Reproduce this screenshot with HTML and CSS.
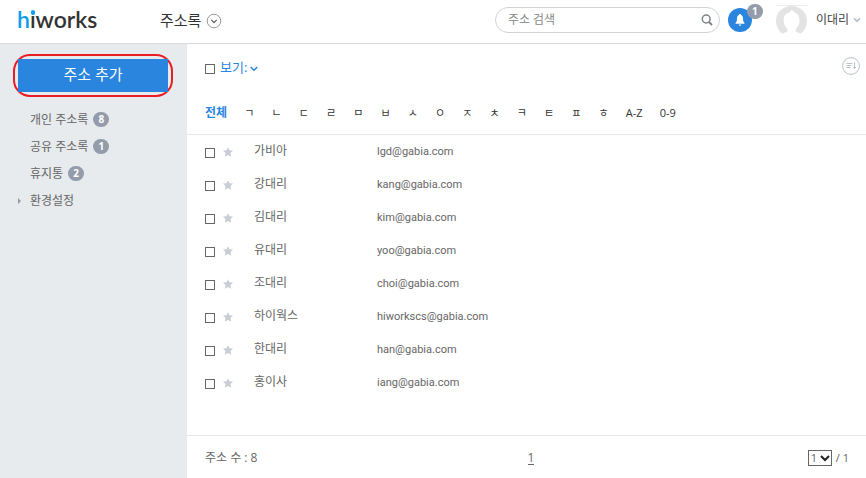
FILE: index.html
```html
<!DOCTYPE html>
<html lang="ko">
<head>
<meta charset="utf-8">
<title>주소록 - hiworks</title>
<link rel="stylesheet" href="styles.css">
</head>
<body>
<svg class="defs" aria-hidden="true">
  <symbol id="star" viewBox="0 0 10 10"><path d="M5 .2 6.500 3.200 10 3.600 7.500 6.100 8.200 9.800 5 8.100 1.800 9.800 2.500 6.100 0 3.600 3.500 3.200z" fill="#c9ced6"/></symbol>
</svg>
<header class="header">
  <a class="logo" href="#"><span class="logo-h">h</span><span class="logo-i">i</span>works</a>
  <button class="app-menu" type="button">
    주소록
    <svg width="16" height="16" viewBox="0 0 16 16" fill="none"><circle cx="8" cy="8" r="6.8" stroke="#999"/><path d="M5.3 6.9 8 9.6l2.7-2.7" stroke="#555" stroke-width="1.2"/></svg>
  </button>
  <form class="search">
    <input type="search" placeholder="주소 검색" aria-label="주소 검색">
    <button type="button" aria-label="검색"><svg width="12" height="12" viewBox="0 0 12 12" fill="none" stroke="#7c8288"><circle cx="5.2" cy="5" r="3.9" stroke-width="1.5"/><path d="m8 8 3 3" stroke-width="2"/></svg></button>
  </form>
  <button class="bell" type="button" aria-label="알림 1">
    <svg width="10" height="14" viewBox="0 0 10 14" fill="#fff"><path d="M5 1c.6 0 1 .4 1 1 1.500.5 2 1.700 2 3.200C8 8 8.500 9 9.500 10v.8H.5V10C1.500 9 2 8 2 5.200 2 3.700 2.500 2.500 4 2c0-.6.4-1 1-1z"/><path d="M3.700 11.400h2.600a1.300 1.300 0 0 1-2.600 0z"/></svg>
    <span class="badge bell-badge">1</span>
  </button>
  <button class="user" type="button">
    <svg class="avatar" width="31" height="29" viewBox="0 0 31 29"><path d="M0 .5h31" stroke="#ececec"/><path d="M6 28.500C2.500 25.500 0 21 0 15.700 0 7.500 6.900 1 15.500 1S31 7.500 31 15.700c0 5.300-2.500 9.800-6 12.800-2-.4-4.200-1.300-5.500-2.300.3-1.800.9-3.200 2.300-4.700 1.500-1.900 1.900-4.500 1.500-8-.3-2.600-1.600-4.800-4.200-5.800-1.300-.6-2.400-1.600-3.300-3.100-.8 1.600-2 2.600-3.500 3.200-2.700 1-4.200 3.100-4.500 5.700-.4 3.500.2 6.100 1.700 8 1.300 1.500 1.900 2.900 2.200 4.700-1.500 1-3.700 1.900-5.700 2.300z" fill="#e3e3e3"/></svg>
    이대리
    <svg width="8" height="6" viewBox="0 0 8 6" fill="none" stroke="#b4bec8" stroke-width="1.600"><path d="m1 1.300 3 3 3-3"/></svg>
  </button>
</header>
<div class="body">
  <aside class="sidebar">
    <div class="ring"><button class="add" type="button">주소 추가</button></div>
    <nav>
      <ul class="folders">
        <li><a href="#">개인 주소록</a><span class="badge">8</span></li>
        <li><a href="#">공유 주소록</a><span class="badge">1</span></li>
        <li><a href="#">휴지통</a><span class="badge">2</span></li>
        <li class="settings"><a href="#">환경설정</a></li>
      </ul>
    </nav>
  </aside>
  <main class="main">
    <div class="toolbar">
      <input type="checkbox" aria-label="전체 선택">
      <button class="view" type="button">보기: <svg width="8" height="6" viewBox="0 0 8 6" fill="none" stroke="#2a85de" stroke-width="1.500"><path d="m.7 1 3.300 3.300L7.300 1"/></svg></button>
      <button class="sort" type="button" aria-label="정렬"><svg width="18" height="18" viewBox="0 0 18 18" fill="none" stroke="#b9c1ca"><circle cx="9" cy="9" r="8.400"/><path d="M4.500 6.500h6M4.500 8.500h5M4.500 10.500h4M12.500 5.500v6M11 10l1.500 1.500L14 10"/></svg></button>
    </div>
    <nav class="index">
      <div class="index-list">
        <a class="on" href="#">전체</a><a href="#">ㄱ</a><a href="#">ㄴ</a><a href="#">ㄷ</a><a href="#">ㄹ</a><a href="#">ㅁ</a><a href="#">ㅂ</a><a href="#">ㅅ</a><a href="#">ㅇ</a><a href="#">ㅈ</a><a href="#">ㅊ</a><a href="#">ㅋ</a><a href="#">ㅌ</a><a href="#">ㅍ</a><a href="#">ㅎ</a><a href="#">A-Z</a><a href="#">0-9</a>
      </div>
    </nav>
    <table class="contacts">
      <tbody>
        <tr><td class="check"><input type="checkbox" aria-label="가비아"></td><td class="star"><svg><use href="#star"/></svg></td><td class="name">가비아</td><td class="mail">lgd@gabia.com</td></tr>
        <tr><td class="check"><input type="checkbox" aria-label="강대리"></td><td class="star"><svg><use href="#star"/></svg></td><td class="name">강대리</td><td class="mail">kang@gabia.com</td></tr>
        <tr><td class="check"><input type="checkbox" aria-label="김대리"></td><td class="star"><svg><use href="#star"/></svg></td><td class="name">김대리</td><td class="mail">kim@gabia.com</td></tr>
        <tr><td class="check"><input type="checkbox" aria-label="유대리"></td><td class="star"><svg><use href="#star"/></svg></td><td class="name">유대리</td><td class="mail">yoo@gabia.com</td></tr>
        <tr><td class="check"><input type="checkbox" aria-label="조대리"></td><td class="star"><svg><use href="#star"/></svg></td><td class="name">조대리</td><td class="mail">choi@gabia.com</td></tr>
        <tr><td class="check"><input type="checkbox" aria-label="하이웍스"></td><td class="star"><svg><use href="#star"/></svg></td><td class="name">하이웍스</td><td class="mail">hiworkscs@gabia.com</td></tr>
        <tr><td class="check"><input type="checkbox" aria-label="한대리"></td><td class="star"><svg><use href="#star"/></svg></td><td class="name">한대리</td><td class="mail">han@gabia.com</td></tr>
        <tr><td class="check"><input type="checkbox" aria-label="홍이사"></td><td class="star"><svg><use href="#star"/></svg></td><td class="name">홍이사</td><td class="mail">iang@gabia.com</td></tr>
      </tbody>
    </table>
    <footer class="footer">
      <span>주소 수 : 8</span>
      <a class="page" href="#">1</a>
      <span class="jump"><span class="select"><select aria-label="페이지"><option>1</option></select><svg width="10" height="7" viewBox="0 0 10 7" fill="none" stroke="#222" stroke-width="2"><path d="m1 1 4 4 4-4"/></svg></span>/ 1</span>
    </footer>
  </main>
</div>
</body>
</html>
```
FILE: styles.css
```css
* { box-sizing: border-box; }

body {
  margin: 0;
  min-height: 100vh;
  display: flex;
  flex-direction: column;
  font: 12px/18px "Open Sans", "Noto Sans CJK KR", sans-serif;
  color: #666;
  background: #fff;
}

.defs { display: none; }

a { color: inherit; text-decoration: none; }

button {
  padding: 0;
  border: 0;
  background: none;
  font: inherit;
  color: inherit;
}

svg { display: block; flex: none; }

input[type="checkbox"] {
  appearance: none;
  display: block;
  flex: none;
  width: 10px;
  height: 10px;
  margin: 0;
  border: 1px solid #666;
  background: #fff;
}

.badge {
  min-width: 16px;
  height: 15px;
  border-radius: 8px;
  background: #949bab;
  color: #fff;
  font-size: 10px;
  font-weight: 700;
  line-height: 15px;
  text-align: center;
}

/* Header */
.header {
  display: flex;
  align-items: center;
  height: 44px;
  padding: 0 5px 4px 17px;
  border-bottom: 1px solid #d9dbdd;
}

.logo {
  width: 143px;
  padding-bottom: 2px;
  font: 600 23px/24px Lato, sans-serif;
  color: #333;
}

.logo-h { color: #0a9df0; }

.logo-i { position: relative; }

.logo-i::after {
  content: "";
  position: absolute;
  left: 1px;
  top: 5px;
  width: 4px;
  height: 5px;
  border-radius: 2px;
  background: #0a9df0;
}

.app-menu {
  display: flex;
  align-items: center;
  gap: 5px;
  font-size: 15px;
  color: #333;
}

.app-menu svg { margin-top: 3px; }

.search {
  display: flex;
  align-items: center;
  width: 225px;
  height: 26px;
  margin-left: auto;
  padding: 0 6px 0 12px;
  border: 1px solid #d0d3d6;
  border-radius: 13px;
}

.search input {
  flex: 1;
  min-width: 0;
  padding: 0;
  border: 0;
  outline: 0;
  background: none;
  font: inherit;
  color: #888;
}

.search input::placeholder { color: #888; }

.bell {
  position: relative;
  display: flex;
  align-items: center;
  justify-content: center;
  width: 24px;
  height: 24px;
  margin-left: 8px;
  border-radius: 50%;
  background: #2a85de;
}

.bell-badge {
  position: absolute;
  left: 19px;
  top: -4px;
}

.user {
  display: flex;
  align-items: center;
  gap: 4px;
  margin-left: 24px;
  font-size: 12px;
  color: #444;
}

.avatar { margin-right: 5px; }

/* Body */
.body {
  flex: 1;
  display: flex;
}

.sidebar {
  width: 187px;
  padding: 10px 14px 0 13px;
  background: #e7ebee;
}

.ring {
  padding: 3px;
  border: 2px solid #ea1c24;
  border-radius: 17px;
}

.add {
  display: block;
  width: 100%;
  height: 33px;
  padding-bottom: 4px;
  background: #2a85de;
  color: #fff;
  font-size: 15px;
}

.folders {
  margin: 9px 0 0;
  padding: 0 0 0 17px;
  list-style: none;
}

.folders li {
  display: flex;
  align-items: center;
  gap: 5px;
  height: 27px;
}

.settings { position: relative; }

.settings::before {
  content: "";
  position: absolute;
  left: -12px;
  border: 3px solid transparent;
  border-left-color: #999;
  border-right-width: 0;
}

/* Main */
.main {
  flex: 1;
  display: flex;
  flex-direction: column;
}

.toolbar {
  display: flex;
  align-items: center;
  gap: 5px;
  padding: 13px 6px 0 18px;
}

.toolbar input { margin-top: 4px; }

.view {
  display: flex;
  align-items: center;
  gap: 3px;
  font-size: 13px;
  color: #2a85de;
}

.view svg { margin-top: 4px; }

.sort { margin: 0 0 2px auto; }

.index {
  padding: 27px 18px 12px;
  border-bottom: 1px solid #e7ebee;
}

.index-list {
  display: flex;
  justify-content: space-between;
  max-width: 471px;
  font-size: 11px;
  color: #333;
}

.index-list .on {
  font-size: 12px;
  font-weight: 700;
  color: #2a85de;
}

.contacts {
  width: 100%;
  table-layout: fixed;
  border-collapse: collapse;
}

.contacts tr { height: 33px; }

.contacts td {
  padding: 0;
  vertical-align: middle;
}

.contacts .check { width: 36px; padding: 3px 0 0 18px; }

.contacts .star { width: 31px; }

.contacts .star svg { width: 10px; height: 10px; }

.contacts .name { width: 123px; padding-bottom: 2px; }

.contacts .mail {
  font-family: Roboto, sans-serif;
  font-size: 11px;
}

.footer {
  display: grid;
  grid-template-columns: 1fr auto 1fr;
  align-items: center;
  height: 43px;
  margin-top: auto;
  padding: 2px 17px 0 18px;
  border-top: 1px solid #e4e7ea;
}

.page {
  margin-left: 8px;
  border-bottom: 1px solid #666;
  line-height: 12px;
}

.jump {
  display: flex;
  align-items: center;
  justify-content: flex-end;
  gap: 4px;
  font-size: 11px;
}

.select { position: relative; }

.select select {
  appearance: none;
  display: block;
  width: 24px;
  height: 16px;
  padding: 0 2px;
  border: 1px solid #666;
  border-radius: 0;
  background: #fff;
  font: inherit;
  line-height: 14px;
  color: #666;
}

.select svg {
  position: absolute;
  right: 2px;
  top: 5px;
  pointer-events: none;
}
```
